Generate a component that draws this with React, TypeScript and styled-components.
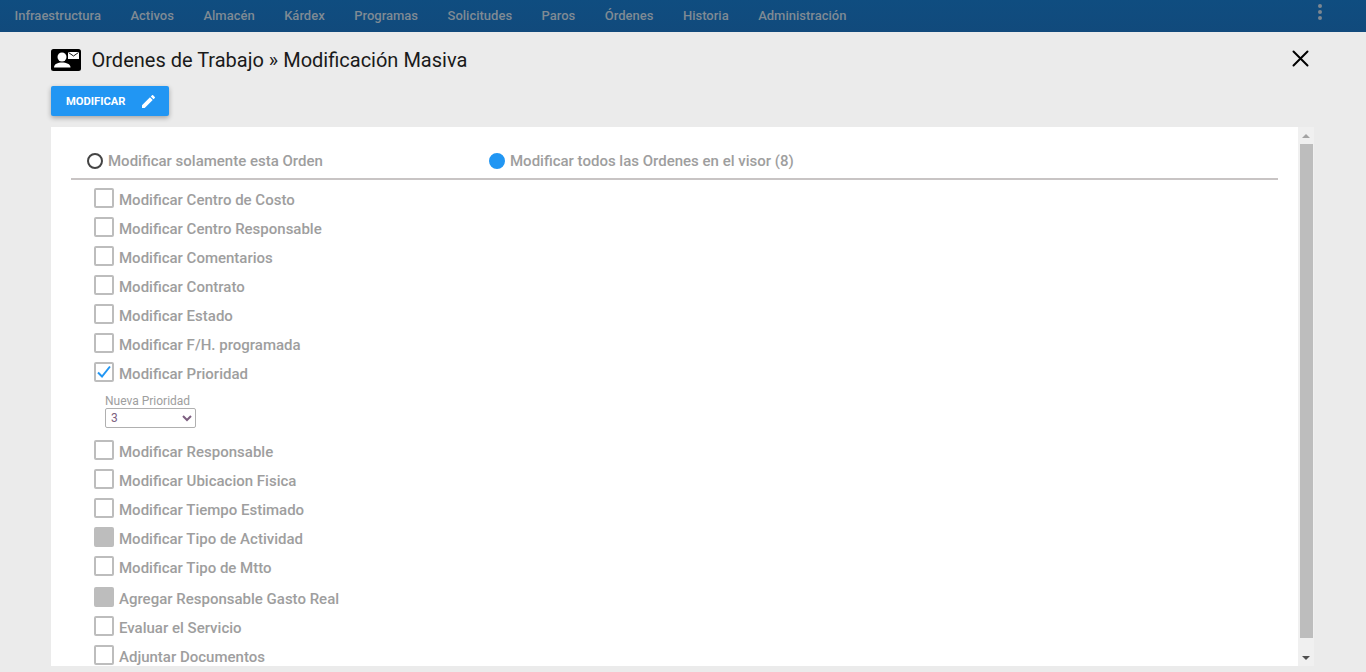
import styled, { createGlobalStyle } from "styled-components";

const GlobalStyle = createGlobalStyle`
  html, body {
    margin: 0;
    height: 100%;
    overflow: hidden;
    background: #ebebeb;
    font-family: Roboto, "Liberation Sans", sans-serif;
  }
`;

const Page = styled.div`
  height: 672px;
  display: flex;
  flex-direction: column;
`;

const TopBar = styled.nav`
  height: 32px;
  flex: none;
  display: flex;
  align-items: center;
  justify-content: space-between;
  padding: 0 44px 2px 14.5px;
  box-sizing: border-box;
  background: linear-gradient(#0f4d80, #114a7c);
`;

const Menu = styled.div`
  display: flex;
  gap: 29.5px;
`;

const MenuItem = styled.a`
  color: #7f8a94;
  font-size: 13px;
  font-weight: 500;
`;

const Kebab = styled.div`
  display: flex;
  flex-direction: column;
  gap: 2px;
  margin-bottom: 6px;
`;

const Dot = styled.span`
  width: 4px;
  height: 4px;
  border-radius: 50%;
  background: #7c8791;
`;

const Main = styled.main`
  flex: 1;
  min-height: 0;
  display: flex;
  flex-direction: column;
  padding: 16px 52px 6px 51px;
`;

const Header = styled.header`
  height: 24px;
  display: flex;
  align-items: center;
  justify-content: space-between;
`;

const TitleGroup = styled.div`
  display: flex;
  align-items: center;
  gap: 10.5px;
`;

const Title = styled.h1`
  margin: 0;
  color: #1a1a1a;
  font-size: 20px;
  font-weight: 400;
`;

const CloseButton = styled.button`
  display: flex;
  margin: 0 5px 4px 0;
  padding: 0;
  border: 0;
  background: none;
`;

const ModifyButton = styled.button`
  width: 118px;
  height: 30px;
  margin: 14px 0 11px;
  display: flex;
  align-items: center;
  gap: 17px;
  padding: 0 0 0 15px;
  border: 0;
  border-radius: 2px;
  background: #2196f3;
  color: #fff;
  font-family: inherit;
  font-size: 11.2px;
  font-weight: 700;
  box-shadow: 0 2px 5px rgba(0, 0, 0, 0.3);
`;

const Panel = styled.section`
  flex: 1;
  min-height: 0;
  display: flex;
  background: #fff;
`;

const PanelBody = styled.div`
  flex: 1;
  min-width: 0;
  overflow: hidden;
  padding: 0 20px;
`;

const RadioRow = styled.div`
  height: 53px;
  display: flex;
  align-items: center;
  padding: 16px 0 0 16px;
  border-bottom: 2px solid #c8c4c4;
  box-sizing: border-box;
`;

const RadioOption = styled.label<{ $wide?: boolean }>`
  display: flex;
  align-items: center;
  gap: 5px;
  width: ${(p) => (p.$wide ? "auto" : "402px")};
  color: #9e9e9e;
  font-size: 15px;
  font-weight: 500;
`;

const RadioMark = styled.span<{ $on?: boolean }>`
  width: 16px;
  height: 16px;
  border-radius: 50%;
  box-sizing: border-box;
  background: ${(p) => (p.$on ? "#2196f3" : "#fff")};
  border: 2px solid ${(p) => (p.$on ? "#2196f3" : "#444")};
`;

const CheckList = styled.div`
  display: flex;
  flex-direction: column;
  padding: 4px 0 0 23px;
`;

const CheckRow = styled.label<{ $shift?: boolean }>`
  height: 29px;
  flex: none;
  display: flex;
  align-items: center;
  gap: 5px;
  margin-top: ${(p) => (p.$shift ? "2px" : "0")};
  color: #9e9e9e;
  font-size: 15px;
  font-weight: 500;
`;

const Box = styled.span<{ $disabled?: boolean }>`
  width: 20px;
  height: 20px;
  flex: none;
  display: flex;
  align-items: center;
  justify-content: center;
  margin-top: -2px;
  box-sizing: border-box;
  border: 2px solid #bdbdbd;
  border-radius: 2px;
  background: ${(p) => (p.$disabled ? "#bdbdbd" : "#fff")};
`;

const CheckLabel = styled.span`
  line-height: 17px;
  margin-top: 4px;
`;

const PriorityField = styled.div`
  height: 49px;
  flex: none;
  display: flex;
  flex-direction: column;
  align-items: flex-start;
  padding: 8px 0 0 11px;
  box-sizing: border-box;
`;

const FieldLabel = styled.span`
  color: #9e9e9e;
  font-size: 12px;
  line-height: 13px;
`;

const PrioritySelect = styled.select`
  width: 91px;
  height: 20px;
  padding: 0 0 0 1px;
  border: 1px solid #b0b0b0;
  border-radius: 2px;
  background: #fff;
  color: #7d5f80;
  font-family: inherit;
  font-size: 12px;
`;

const ScrollBar = styled.div`
  width: 16px;
  flex: none;
  display: flex;
  flex-direction: column;
  background: #f0f0f0;
`;

const ScrollArrow = styled.span<{ $down?: boolean }>`
  height: 17px;
  flex: none;
  display: flex;
  align-items: center;
  justify-content: center;
  &::before {
    content: "";
    border-left: 4px solid transparent;
    border-right: 4px solid transparent;
    ${(p) =>
      p.$down
        ? "border-top: 4px solid #505050;"
        : "border-bottom: 4px solid #a3a3a3;"}
  }
`;

const ScrollTrack = styled.div`
  flex: 1;
  padding: 0 1px 11px 2px;
  display: flex;
`;

const ScrollThumb = styled.div`
  flex: 1;
  background: #bdbdbd;
`;

const menu = [
  "Infraestructura",
  "Activos",
  "Almacén",
  "Kárdex",
  "Programas",
  "Solicitudes",
  "Paros",
  "Órdenes",
  "Historia",
  "Administración",
];

const checksBefore = [
  "Modificar Centro de Costo",
  "Modificar Centro Responsable",
  "Modificar Comentarios",
  "Modificar Contrato",
  "Modificar Estado",
  "Modificar F/H. programada",
];

const IdCardIcon = () => (
  <svg width="30" height="22" viewBox="0 0 30 22">
    <rect width="30" height="22" rx="2.5" fill="#000" />
    <circle cx="11" cy="8" r="4.5" fill="#fff" />
    <path d="M3 18.5c0-3.6 3.8-5 8-5s8.500 1.400 8.500 5z" fill="#fff" />
    <rect x="17" y="3" width="11" height="7" fill="#fff" />
    <path d="M17.500 3.500l5 3.500 5-3.500" fill="none" stroke="#000" strokeWidth="0.9" />
  </svg>
);

const CloseIcon = () => (
  <svg width="17" height="17" viewBox="0 0 17 17">
    <path d="M1.500 1.500l14 14M15.500 1.500l-14 14" stroke="#000" strokeWidth="2" strokeLinecap="round" />
  </svg>
);

const PencilIcon = () => (
  <svg width="13" height="13" viewBox="3 3 18 18">
    <path
      fill="#fff"
      d="M3 17.250V21h3.750L17.810 9.940l-3.750-3.750L3 17.250zM20.710 7.040a1 1 0 0 0 0-1.410l-2.340-2.340a1 1 0 0 0-1.410 0l-1.830 1.830 3.750 3.750 1.830-1.830z"
    />
  </svg>
);

const CheckIcon = () => (
  <svg width="16" height="16" viewBox="0 0 16 16">
    <path d="M2 8.500l4 4 8-10" fill="none" stroke="#2196f3" strokeWidth="2" />
  </svg>
);

const Check = ({
  label,
  checked,
  disabled,
  shift,
}: {
  label: string;
  checked?: boolean;
  disabled?: boolean;
  shift?: boolean;
}) => (
  <CheckRow $shift={shift}>
    <Box $disabled={disabled}>{checked && <CheckIcon />}</Box>
    <CheckLabel>{label}</CheckLabel>
  </CheckRow>
);

const App = () => {
  return (
    <Page>
      <GlobalStyle />
      <TopBar>
        <Menu>
          {menu.map((item) => (
            <MenuItem key={item}>{item}</MenuItem>
          ))}
        </Menu>
        <Kebab>
          <Dot />
          <Dot />
          <Dot />
        </Kebab>
      </TopBar>
      <Main>
        <Header>
          <TitleGroup>
            <IdCardIcon />
            <Title>Ordenes de Trabajo » Modificación Masiva</Title>
          </TitleGroup>
          <CloseButton>
            <CloseIcon />
          </CloseButton>
        </Header>
        <ModifyButton>
          MODIFICAR
          <PencilIcon />
        </ModifyButton>
        <Panel>
          <PanelBody>
            <RadioRow>
              <RadioOption>
                <RadioMark />
                Modificar solamente esta Orden
              </RadioOption>
              <RadioOption $wide>
                <RadioMark $on />
                Modificar todos las Ordenes en el visor (8)
              </RadioOption>
            </RadioRow>
            <CheckList>
              {checksBefore.map((label) => (
                <Check key={label} label={label} />
              ))}
              <Check label="Modificar Prioridad" checked />
              <PriorityField>
                <FieldLabel>Nueva Prioridad</FieldLabel>
                <PrioritySelect defaultValue="3">
                  <option>1</option>
                  <option>2</option>
                  <option>3</option>
                </PrioritySelect>
              </PriorityField>
              <Check label="Modificar Responsable" />
              <Check label="Modificar Ubicacion Fisica" />
              <Check label="Modificar Tiempo Estimado" />
              <Check label="Modificar Tipo de Actividad" disabled />
              <Check label="Modificar Tipo de Mtto" />
              <Check label="Agregar Responsable Gasto Real" disabled shift />
              <Check label="Evaluar el Servicio" />
              <Check label="Adjuntar Documentos" />
            </CheckList>
          </PanelBody>
          <ScrollBar>
            <ScrollArrow />
            <ScrollTrack>
              <ScrollThumb />
            </ScrollTrack>
            <ScrollArrow $down />
          </ScrollBar>
        </Panel>
      </Main>
    </Page>
  );
};

export default App;
